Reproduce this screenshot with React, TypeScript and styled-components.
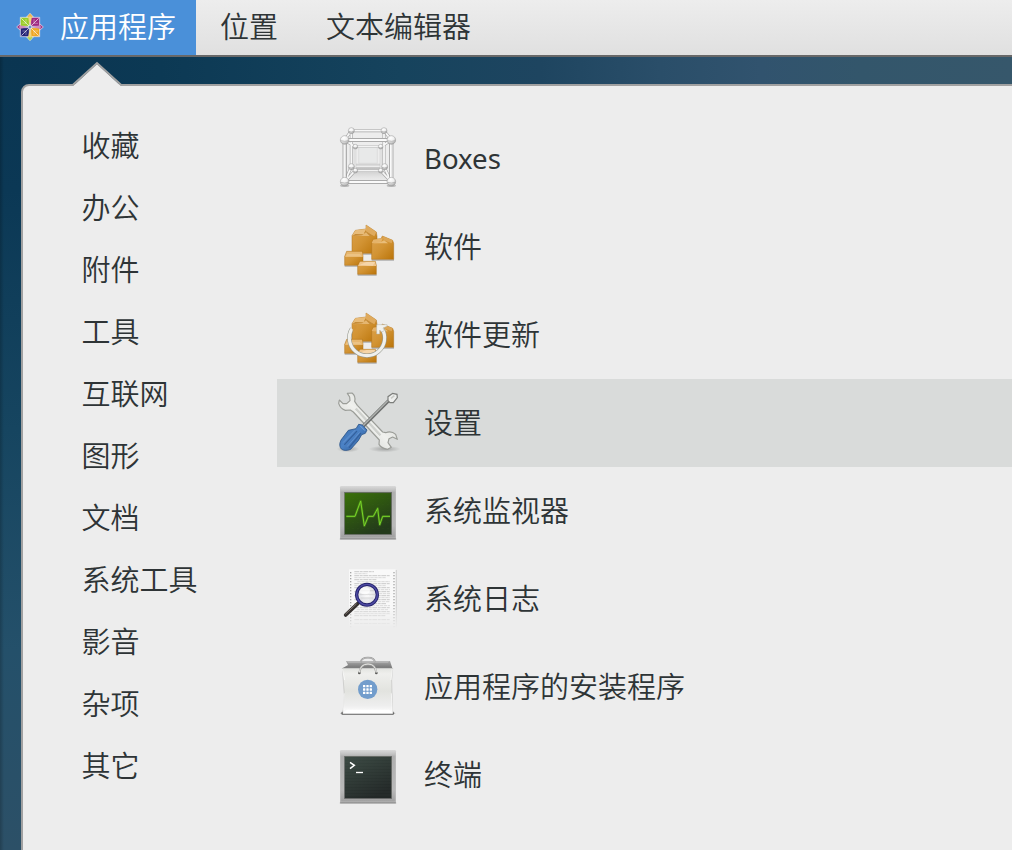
import React from 'react';
import styled, { createGlobalStyle } from 'styled-components';

const GlobalStyle = createGlobalStyle`
  * { box-sizing: border-box; }
  body {
    margin: 0;
    overflow: hidden;
    font-family: "Noto Sans CJK SC", "Noto Sans", sans-serif;
    font-size: 29px;
    font-weight: 350;
    color: #2e3436;
  }
`;

const Desktop = styled.div`
  display: flex;
  flex-direction: column;
  width: 1012px;
  height: 850px;
  overflow: hidden;
  background:
    linear-gradient(to right, #0003, transparent 4px) 0 57px / 22px 100% no-repeat,
    linear-gradient(to bottom, #0a3551 57px, #0b3855 190px, #164560 430px, #24506a 650px, #2c5067 850px) 0 0 / 22px 100% no-repeat,
    linear-gradient(to right, #0a3451 0, #0c3954 160px, #16435d 400px, #1e4560 540px, #2a4e69 660px, #31536e 760px, #33566b 860px, #36576b 1012px);
`;

const TopBar = styled.nav`
  display: flex;
  flex: none;
  height: 57px;
  border-bottom: 2px solid #686868;
  background: linear-gradient(#ededed, #e0e0e0);
`;

const BarItem = styled.div<{ $active?: boolean }>`
  display: flex;
  align-items: center;
  gap: 14px;
  height: 55px;
  padding: ${p => (p.$active ? '0 20px 4px 14px' : '0 24px 4px')};
  line-height: 51px;
  white-space: nowrap;
  color: ${p => (p.$active ? '#fff' : 'inherit')};
  background: ${p => (p.$active ? '#4a90d9' : 'transparent')};
`;

const LogoSvg = styled.svg`
  display: block;
  flex: none;
  width: 32px;
  height: 32px;
  margin-top: 3px;
`;

const Popup = styled.main`
  position: relative;
  display: flex;
  flex: 1;
  margin: 27px -10px -10px 21px;
  border: 2px solid #a1a1a1;
  border-radius: 8px;
  background: #ededed;
`;

const Pointer = styled.svg`
  position: absolute;
  left: 48px;
  top: -25px;
  width: 52px;
  height: 26px;
`;

const Categories = styled.ul`
  flex: none;
  width: 254px;
  margin: 0;
  padding: 30px 0 0 58.5px;
  list-style: none;
`;

const Category = styled.li`
  height: 62px;
  line-height: 56px;
`;

const Apps = styled.ul`
  flex: 1;
  margin: 0;
  padding: 29px 0 0;
  list-style: none;
`;

const AppRow = styled.li<{ $selected?: boolean }>`
  display: flex;
  align-items: center;
  gap: 24px;
  height: 88px;
  padding-left: 59px;
  background: ${p => (p.$selected ? '#d9dbda' : 'transparent')};
`;

const AppIcon = styled.svg`
  display: block;
  flex: none;
  width: 64px;
  height: 64px;
  overflow: visible;
`;

const AppName = styled.span<{ $latin?: boolean }>`
  line-height: ${p => (p.$latin ? '86px' : '84px')};
  height: 88px;
  font-family: ${p => (p.$latin ? '"Noto Sans", sans-serif' : 'inherit')};
  font-size: ${p => (p.$latin ? '27.6px' : 'inherit')};
  font-weight: ${p => (p.$latin ? 400 : 'inherit')};
`;

const Logo = () => (
  <LogoSvg viewBox="42 33 96 96">
    <g stroke="#f4f0f7" strokeWidth="2">
      <path d="M90 40L101 52H79Z" fill="#efa724" />
      <path d="M130 81L118 92V70Z" fill="#932279" />
      <path d="M90 122L79 110H101Z" fill="#9ccd2a" />
      <path d="M50 81L62 70V92Z" fill="#932279" />
      <path d="M61 52H88V79H61Z" fill="#9ccd2a" />
      <path d="M92 52H119V79H92Z" fill="#a02782" />
      <path d="M61 83H88V110H61Z" fill="#262577" />
      <path d="M92 83H119V110H92Z" fill="#efa724" />
    </g>
    <path d="M84 50H96L90 78ZM90 84L96 112H84Z" fill="#efcc65" />
    <path d="M58 76L86 81L58 87ZM122 76L94 81L122 87Z" fill="#c277b1" />
    <path d="M64 55L116 107M116 55L64 107" stroke="#fff" strokeWidth="2" />
    <path d="M67 69L78 70V57M102 57V70H114M67 93H78V105M102 105V93H114M90 45V117M55 81H125" fill="none" stroke="#ffffff80" strokeWidth="2" />
    <circle cx="90" cy="81" r="3" fill="#3977b8" />
  </LogoSvg>
);

const frontBars = 'M44 66H184M44 192H184M44 66V192M184 66V192';
const backBars = 'M75 86H153M75 158H153M75 86V158M153 86V158';
const rearBars = 'M64 38H162M64 38V146M162 38V146';
const diagonals = 'M44 66L64 38M184 66L162 38M44 192L64 146M184 192L162 146M44 66L75 86M184 66L153 86M44 192L75 158M184 192L153 158';

const Ball = ({ x, y, r }: { x: number; y: number; r: number }) => (
  <>
    <circle cx={x} cy={y} r={r} fill="url(#ball)" stroke="#999" strokeWidth="1.5" />
    <path d={`M${x - r + 1} ${y + 2}Q${x} ${y + 6} ${x + r - 1} ${y + 2}`} fill="none" stroke="#a5a5a5" strokeWidth="2" />
  </>
);

const BoxesIcon = () => (
  <AppIcon viewBox="18 27 192 192">
    <defs>
      <radialGradient id="ball" cx=".4" cy=".25" r=".8">
        <stop offset="0" stopColor="#fff" />
        <stop offset=".5" stopColor="#efefef" />
        <stop offset="1" stopColor="#999" />
      </radialGradient>
      <linearGradient id="floor" x1="0" y1="0" x2="0" y2="1">
        <stop offset="0" stopColor="#bbb" />
        <stop offset="1" stopColor="#ddd" stopOpacity="0" />
      </linearGradient>
    </defs>
    <path d="M76 148H152L174 192H54Z" fill="url(#floor)" />
    <path d="M86 88H142V136H86Z" fill="#e8e9e9" stroke="#d6d6d6" strokeWidth="2" />
    <path d="M75 140H153" stroke="#d2d2d2" strokeWidth="6" />
    <path d={backBars} stroke="#bababa" strokeWidth="7" fill="none" />
    <path d={backBars} stroke="#f3f3f3" strokeWidth="4" fill="none" />
    <path d={rearBars + diagonals} stroke="#a4a4a4" strokeWidth="9" fill="none" />
    <path d={rearBars + diagonals} stroke="#f7f7f7" strokeWidth="5.5" fill="none" />
    <Ball x={76} y={86} r={7} /><Ball x={152} y={86} r={7} />
    <Ball x={76} y={158} r={7} /><Ball x={152} y={158} r={7} />
    <Ball x={64} y={38} r={9} /><Ball x={162} y={38} r={9} />
    <Ball x={64} y={146} r={9} /><Ball x={164} y={146} r={9} />
    <path d={frontBars} stroke="#8f8f8f" strokeWidth="12" fill="none" />
    <path d={frontBars} stroke="#fafafa" strokeWidth="8" fill="none" />
    <path d="M46 72V186M186 72V186" stroke="#ccc" strokeWidth="2" />
    <ellipse cx="44" cy="203" rx="14" ry="4" fill="#0003" />
    <ellipse cx="184" cy="203" rx="14" ry="4" fill="#0003" />
    <Ball x={44} y={66} r={13} /><Ball x={184} y={66} r={13} />
    <Ball x={44} y={191} r={13} /><Ball x={184} y={191} r={13} />
  </AppIcon>
);

const Cartons = ({ id }: { id: string }) => (
  <>
    <defs>
      <linearGradient id={id} x1="0" y1="0" x2="1" y2="1">
        <stop offset="0" stopColor="#dda34d" />
        <stop offset=".5" stopColor="#d29333" />
        <stop offset="1" stopColor="#ba7409" />
      </linearGradient>
    </defs>
    <path d="M66 126H140M125 144H192M44 162H99M83 189H140" stroke="#0003" strokeWidth="6" />
    <path d="M66 71L76 55L108 51L108 39L139 60L141 73V124H66Z" fill={`url(#${id})`} stroke="#ad711d" strokeWidth="1.5" />
    <path d="M67 71L76 55L108 51L100 70Z" fill="#e8bc7a" />
    <path d="M108 39L139 60L133 73L108 61Z" fill="#dfaa5d" />
    <path d="M76 66L101 67L106 56L130 72H67Z" fill="#c58b36" />
    <path d="M68 72L96 70L108 61L119 72Z" fill="#ecc17f" opacity=".8" />
    <path d="M125 93L130 82L153 80L157 72L188 85L191 94V142H125Z" fill={`url(#${id})`} stroke="#ad711d" strokeWidth="1.5" />
    <path d="M125 93L130 83L158 79L153 92Z" fill="#e5b36a" />
    <path d="M157 72L188 85L185 94L162 85Z" fill="#dca554" />
    <path d="M128 94L153 90L162 85L174 94Z" fill="#e9bd79" />
    <path d="M44 133L50 118H97L99 132V160H44Z" fill={`url(#${id})`} stroke="#ad711d" strokeWidth="1.5" />
    <path d="M45 134L51 119H96L99 134Z" fill="#e7b76f" />
    <path d="M52 126H89L97 134H46Z" fill="#f0cc94" opacity=".6" />
    <path d="M83 162L90 148H136L139 160V187H83Z" fill={`url(#${id})`} stroke="#ad711d" strokeWidth="1.5" />
    <path d="M84 162L90 149H135L139 162Z" fill="#efc58c" />
    <path d="M89 158L110 150L136 149L128 161Z" fill="#f8dcb5" opacity=".7" />
  </>
);

const SoftwareIcon = () => (
  <AppIcon viewBox="18 9 192 192"><Cartons id="carton" /></AppIcon>
);

const UpdateIcon = () => (
  <AppIcon viewBox="18 9 192 192">
    <Cartons id="cartonUpdate" />
    <path d="M66 86A53 53 0 1 0 156 86" fill="none" stroke="#989b92" strokeWidth="13" />
    <path d="M66 86A53 53 0 1 0 156 86" fill="none" stroke="#f0f0ec" strokeWidth="9.5" />
    <path d="M140 74H171V79L159 84L163 92L155 96L149 90V102H140Z" fill="#f1f1ed" stroke="#b0b0a8" strokeWidth="1.5" />
    <path d="M67 76L80 76L79 84L68 95Z" fill="#d29437" opacity=".8" />
  </AppIcon>
);

const SettingsIcon = () => (
  <AppIcon viewBox="18 33 192 192">
    <defs>
      <linearGradient id="steel" x1="0" y1="1" x2="1" y2="0">
        <stop offset="0" stopColor="#bdbfbc" /><stop offset=".5" stopColor="#f0f1ee" /><stop offset="1" stopColor="#c5c7c2" />
      </linearGradient>
      <linearGradient id="handle" x1="0" y1="0" x2="1" y2="1">
        <stop offset="0" stopColor="#3767a3" /><stop offset=".45" stopColor="#4b82c6" /><stop offset="1" stopColor="#2a5792" />
      </linearGradient>
      <radialGradient id="ground"><stop offset="0" stopColor="#000" stopOpacity=".25" /><stop offset="1" stopColor="#000" stopOpacity="0" /></radialGradient>
    </defs>
    <g fill="url(#ground)">
      <ellipse cx="54" cy="207" rx="34" ry="10" /><ellipse cx="164" cy="207" rx="48" ry="10" />
    </g>
    <path d="M52 40L66 39Q78 48 74 64L82 76L158 156L167 158Q184 151 197 163L202 178L188 171L177 176L174 188L184 202L173 208Q154 205 147 193L148 180L70 96L61 90L46 91Q31 86 26 70L28 60L39 71L50 71L60 62L59 51Z"
      fill="url(#steel)" stroke="#9b9d98" strokeWidth="3.5" strokeLinejoin="round" />
    <path d="M77 86L151 166" stroke="#cfd1cd" strokeWidth="8" />
    <path d="M76 91L148 170" stroke="#eeefec" strokeWidth="3" />
    <path d="M100 138L176 62" stroke="#6b6d6c" strokeWidth="10" />
    <path d="M99 137L176 60" stroke="#b0b2b0" strokeWidth="4" />
    <path d="M174 62L174 50L188 40L201 43L202 53L190 68L180 68Z" fill="#eeefed" stroke="#7b7d7a" strokeWidth="3.5" />
    <path d="M183 55L193 47" stroke="#c8cac6" strokeWidth="5" />
    <path d="M86 133L97 135L111 150L106 160L95 164L85 182L62 208Q44 215 34 207Q25 197 33 180L55 151L78 146Z" fill="url(#handle)" stroke="#2b5488" strokeWidth="2.5" />
    <path d="M80 154L44 193M92 160L58 202" stroke="#34609c" strokeWidth="4" strokeLinecap="round" />
    <path d="M75 151L40 187M88 158L52 199" stroke="#6f9cd4" strokeWidth="2" strokeLinecap="round" />
    <path d="M90 137L105 152" stroke="#7fa7d8" strokeWidth="3" />
  </AppIcon>
);

const Screen = ({ id, from, to }: { id: string; from: string; to: string }) => (
  <>
    <defs>
      <linearGradient id={id + 'frame'} x1="0" y1="0" x2="0" y2="1">
        <stop offset="0" stopColor="#d9d9d9" /><stop offset=".08" stopColor="#c2c2c2" /><stop offset=".12" stopColor="#afafaf" /><stop offset=".75" stopColor="#b9b9b9" /><stop offset="1" stopColor="#9d9d9d" />
      </linearGradient>
      <linearGradient id={id + 'screen'} x1="0" y1="0" x2=".55" y2="1">
        <stop offset="0" stopColor={from} /><stop offset="1" stopColor={to} />
      </linearGradient>
    </defs>
    <rect x="29" y="186" width="170" height="6" rx="3" fill="#0003" />
    <rect x="30" y="30" width="168" height="159" rx="4" fill={`url(#${id}frame)`} />
    <path d="M32 40V186H196V40" fill="none" stroke="#c4c4c4" strokeWidth="2" />
    <path d="M31 188H197" stroke="#8b8b8b" strokeWidth="2" />
    <rect x="43" y="49" width="142" height="127" fill={`url(#${id}screen)`} stroke="#777" strokeWidth="2" />
    <path d="M44 50H184V175" fill="none" stroke="#5d635b" strokeWidth="1.5" />
  </>
);

const MonitorIcon = () => (
  <AppIcon viewBox="18 9 192 192">
    <Screen id="monitor" from="#3a7208" to="#233a1b" />
    <path d="M53 67H182M53 85H182M53 103H182M53 139H182M53 157H182" stroke="#68a03b55" strokeWidth="1.5" strokeDasharray="2 13" />
    <g fill="none" strokeLinejoin="round">
      <path d="M49 121H75L92 75L103 150L115 121H130L143 97L149 147L158 121H180" stroke="#70ce2050" strokeWidth="7" />
      <path d="M49 121H75L92 75L103 150L115 121H130L143 97L149 147L158 121H180" stroke="#79d629" strokeWidth="3" />
    </g>
  </AppIcon>
);

const LogIcon = () => (
  <AppIcon viewBox="18 273 192 192">
    <defs>
      <linearGradient id="paperFade" x1="0" y1="0" x2="0" y2="1">
        <stop offset="0" stopColor="#fff" /><stop offset=".6" stopColor="#fff" /><stop offset="1" stopColor="#fff" stopOpacity="0" />
      </linearGradient>
      <mask id="paperMask"><rect x="55" y="274" width="150" height="184" fill="url(#paperFade)" /></mask>
      <radialGradient id="glass"><stop offset="0" stopColor="#fff" stopOpacity=".85" /><stop offset="1" stopColor="#d9dadf" stopOpacity=".9" /></radialGradient>
    </defs>
    <g mask="url(#paperMask)">
      <rect x="196" y="282" width="4" height="172" fill="#c9c9c9" />
      <rect x="57" y="280" width="140" height="176" fill="#f9f9f9" />
      <path d="M62 289V454M192 289V454" stroke="#8a8a8a" strokeWidth="4" strokeDasharray="3 6" />
      <path d="M73 287H132M73 299H180M73 311H139M73 323H180M73 335H180M73 347H180M73 359H180M73 371H180M73 383H170M73 395H180M73 407H180M73 419H166M73 431H180M73 443H180" stroke="#c1c1c1" strokeWidth="2.5" strokeDasharray="14 2 9 2" />
      <path d="M73 293H112M73 305H169M82 317H180M73 329H169M140 341H180M146 353H180M142 365H180M132 377H180M90 389H180M80 401H175M73 413H180" stroke="#dadada" strokeWidth="3" strokeDasharray="10 2" />
    </g>
    <path d="M47 417L84 382" stroke="#35312f" strokeWidth="11" strokeLinecap="round" />
    <path d="M47 414L79 384" stroke="#81766e" strokeWidth="3" strokeLinecap="round" />
    <circle cx="111" cy="356" r="31" fill="url(#glass)" />
    <path d="M91 344H132M88 355H135M92 366H130" stroke="#aaa" strokeWidth="2" opacity=".6" />
    <ellipse cx="104" cy="344" rx="16" ry="11" fill="#fff" opacity=".7" />
    <circle cx="111" cy="356" r="31" fill="none" stroke="#25236c" strokeWidth="10" />
    <circle cx="111" cy="356" r="31" fill="none" stroke="#4e4ba4" strokeWidth="4" />
  </AppIcon>
);

const InstallerIcon = () => (
  <AppIcon viewBox="18 30 192 192">
    <defs>
      <linearGradient id="bag" x1="0" y1="0" x2="0" y2="1">
        <stop offset="0" stopColor="#e3e4e0" /><stop offset=".12" stopColor="#efefed" /><stop offset=".5" stopColor="#e2e3df" /><stop offset=".82" stopColor="#eee" /><stop offset="1" stopColor="#fff" />
      </linearGradient>
      <linearGradient id="bagInside" x1="0" y1="0" x2="0" y2="1"><stop offset="0" stopColor="#aaa" /><stop offset="1" stopColor="#737373" /></linearGradient>
    </defs>
    <path d="M40 194L30 207H197L186 194Z" fill="#0003" />
    <rect x="34" y="201" width="158" height="9" rx="4" fill="#0007" />
    <path d="M48 48H180L187 70H37L54 60Z" fill="url(#bagInside)" />
    <path d="M49 48H179L174 53H55Z" fill="#b7b7b7" />
    <path d="M92 53Q93 38 114 38Q134 38 135 53" fill="none" stroke="#969696" strokeWidth="5" />
    <path d="M92 53Q93 38 114 38Q134 38 135 53" fill="none" stroke="#ccc" strokeWidth="2" />
    <path d="M37 70H188L185 105L188 206H39L43 150Z" fill="url(#bag)" stroke="#b5b5b3" strokeWidth="1.5" />
    <path d="M44 105L37 72M183 105L187 72M43 145L40 205M184 145L187 205" stroke="#fff" strokeWidth="2" />
    <path d="M40 205L49 194H179L187 205Z" fill="#fff" />
    <circle cx="88" cy="84" r="4" fill="#5a5a58" /><circle cx="139" cy="84" r="4" fill="#5a5a58" />
    <path d="M88 83Q91 57 114 57Q136 57 139 83" fill="none" stroke="#a3a3a0" strokeWidth="6" />
    <path d="M88 82Q91 57 114 57Q136 57 139 82" fill="none" stroke="#e9e9e7" strokeWidth="3" />
    <circle cx="113" cy="133" r="29" fill="#729dcc" />
    <g fill="#fff">
      {[99, 109, 119].map(x => [120, 130, 140].map(y => <rect key={`${x}-${y}`} x={x} y={y} width="7" height="7" rx="1" />))}
    </g>
  </AppIcon>
);

const TerminalIcon = () => (
  <AppIcon viewBox="18 9 192 192">
    <Screen id="terminal" from="#3b4a43" to="#222827" />
    <path d="M45 57H183M45 66H183M45 75H183M45 84H183M45 93H183M45 102H183M45 111H183M45 120H183M45 129H183M45 138H183M45 147H183M45 156H183M45 165H183" stroke="#ffffff0d" strokeWidth="2" />
    <path d="M60 67L73 76L60 86" fill="none" stroke="#fff" strokeWidth="4.5" />
    <path d="M78 97.5H99" stroke="#fff" strokeWidth="4" />
  </AppIcon>
);

const categories = ['收藏', '办公', '附件', '工具', '互联网', '图形', '文档', '系统工具', '影音', '杂项', '其它'];

const apps = [
  { name: 'Boxes', Icon: BoxesIcon, latin: true },
  { name: '软件', Icon: SoftwareIcon },
  { name: '软件更新', Icon: UpdateIcon },
  { name: '设置', Icon: SettingsIcon, selected: true },
  { name: '系统监视器', Icon: MonitorIcon },
  { name: '系统日志', Icon: LogIcon },
  { name: '应用程序的安装程序', Icon: InstallerIcon },
  { name: '终端', Icon: TerminalIcon },
];

export default function App() {
  return (
    <>
      <GlobalStyle />
      <Desktop>
        <TopBar>
          <BarItem $active><Logo />应用程序</BarItem>
          <BarItem>位置</BarItem>
          <BarItem>文本编辑器</BarItem>
        </TopBar>
        <Popup>
          <Pointer viewBox="0 0 52 26">
            <path d="M1 26L26 3L51 26Z" fill="#ededed" />
            <path d="M1.5 24.2L26 2L50.5 24.2" fill="none" stroke="#a1a1a1" strokeWidth="2" />
          </Pointer>
          <Categories>
            {categories.map(c => <Category key={c}>{c}</Category>)}
          </Categories>
          <Apps>
            {apps.map(({ name, Icon, latin, selected }) => (
              <AppRow key={name} $selected={selected}>
                <Icon />
                <AppName $latin={latin}>{name}</AppName>
              </AppRow>
            ))}
          </Apps>
        </Popup>
      </Desktop>
    </>
  );
}
